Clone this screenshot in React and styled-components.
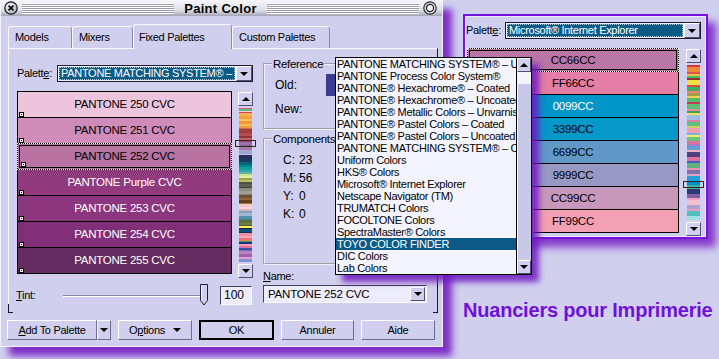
import React from "react";
import styled, { createGlobalStyle } from "styled-components";

const UI = `"Liberation Sans", Arial, sans-serif`;
const LAV = "#d0d0ee";
const TEAL = "#0b5b86";

const GlobalStyle = createGlobalStyle`
  html, body { margin: 0; padding: 0; background: ${LAV}; }
  body { font-family: ${UI}; font-size: 11px; line-height: 13px; letter-spacing: -0.3px; color: #000; }
  * { box-sizing: border-box; }
`;

const Desktop = styled.div`
  position: relative;
  width: 719px;
  height: 359px;
  overflow: hidden;
  background: ${LAV};
`;

/* ---------- main window ---------- */

const MainWindow = styled.div`
  position: absolute;
  left: 0;
  top: 0;
  width: 443px;
  height: 347px;
  background: ${LAV};
  border: 1px solid #f2f2ff;
  border-top: none;
  box-shadow: 9px 9px 7px rgba(118, 28, 196, 0.9);
  display: flex;
  flex-direction: column;
  z-index: 2;
`;

const TitleBar = styled.div`
  height: 16px;
  display: flex;
  align-items: center;
  gap: 4px;
  padding: 0 5px 0 3px;
  background: linear-gradient(#f6f6fa, #dedee6 65%, #a4a4b4);
`;

const Stripes = styled.div`
  flex: 1;
  height: 11px;
  background: repeating-linear-gradient(to bottom, #ffffff 0 1px, #9c9cae 1px 2px);
`;

const TitleText = styled.div`
  font-weight: bold;
  font-size: 13px;
  letter-spacing: 0.3px;
  padding: 0 6px;
`;

const Body = styled.div`
  flex: 1;
  display: flex;
  flex-direction: column;
  padding: 8px 4px 0 7px;
`;

const TabRow = styled.div`
  display: flex;
  align-items: flex-end;
  height: 24px;
`;

const Tab = styled.div`
  width: ${(p) => p.w}px;
  height: ${(p) => (p.active ? 25 : 22)}px;
  padding: ${(p) => (p.active ? "6px 0 0 5px" : "4px 0 0 6px")};
  margin-bottom: ${(p) => (p.active ? -1 : 0)}px;
  border: 1px solid #f8f8ff;
  border-right-color: #8c8cac;
  border-bottom: none;
  border-radius: 3px 4px 0 0;
  background: ${LAV};
  position: relative;
  z-index: ${(p) => (p.active ? 1 : 0)};
  white-space: nowrap;
`;

const Panel = styled.div`
  position: relative;
  width: 430px;
  height: 265px;
  border-top: 1px solid #f8f8ff;
  border-left: 1px solid #f8f8ff;
  border-right: 1px solid #181830;
  display: flex;
  padding-left: 8px;

  &::before,
  &::after {
    content: "";
    position: absolute;
    bottom: 0;
    width: 4px;
    height: 8px;
    border-bottom: 1px solid #181830;
  }
  &::before {
    left: -1px;
    border-left: 1px solid #181830;
  }
  &::after {
    right: -1px;
    border-right: 1px solid #181830;
  }
`;

const LeftCol = styled.div`
  width: 246px;
  display: flex;
  flex-direction: column;
`;

const RightCol = styled.div`
  width: 165px;
  display: flex;
  flex-direction: column;
`;

const FieldRow = styled.div`
  display: flex;
  align-items: center;
  height: ${(p) => p.h || 17}px;
  margin-top: ${(p) => p.mt || 0}px;
`;

const Label = styled.span`
  width: ${(p) => p.w}px;
  flex: none;
  white-space: nowrap;
`;

const SelectBox = styled.div`
  display: flex;
  width: ${(p) => p.w}px;
  height: 17px;
  border: 1px solid #1c1c34;
  background: #f0f0fc;
`;

const SelectValue = styled.div`
  flex: 1;
  margin: 1px;
  padding: 0 2px;
  line-height: 13px;
  background: ${TEAL};
  color: #fff;
  outline: 1px dotted #a8c8d8;
  outline-offset: -1px;
  white-space: nowrap;
  overflow: hidden;
`;

const DropBtn = styled.div`
  width: 16px;
  flex: none;
  display: flex;
  align-items: center;
  justify-content: center;
  background: ${LAV};
  border: 1px solid;
  border-color: #ffffff #505070 #505070 #ffffff;
`;

const Tri = styled.span`
  width: 0;
  height: 0;
  border-left: 4px solid transparent;
  border-right: 4px solid transparent;
  ${(p) => (p.up ? "border-bottom" : "border-top")}: 4px solid #000;
`;

const ListArea = styled.div`
  display: flex;
  align-items: flex-start;
  gap: ${(p) => p.gap}px;
  margin-top: ${(p) => p.mt}px;
  margin-left: ${(p) => p.ml || 0}px;
`;

const SwatchList = styled.div`
  width: ${(p) => p.w}px;
  border: 1px solid #000;
  display: flex;
  flex-direction: column;
  background: #000;
  gap: 1px;
`;

const Swatch = styled.div`
  position: relative;
  height: ${(p) => p.h}px;
  background: ${(p) => p.bg};
  color: ${(p) => p.fg};
  display: flex;
  align-items: center;
  justify-content: center;
  font-size: 11.5px;
  letter-spacing: -0.25px;
  white-space: nowrap;

  ${(p) =>
    p.sel &&
    `
    z-index: 1;
    &::before {
      content: "";
      position: absolute;
      inset: -1px;
      border: 1px dotted #ffffff;
    }
    &::after {
      content: "";
      position: absolute;
      inset: 1px;
      border: 1px solid #000;
    }
  `}
`;

const Marker = styled.span`
  position: absolute;
  left: ${(p) => (p.sel ? 3 : 1)}px;
  bottom: ${(p) => (p.sel ? 2 : 0)}px;
  width: 5px;
  height: 5px;
  border: 1px solid #000;
  background: #fff;
  z-index: 2;

  &::after {
    content: "";
    position: absolute;
    left: 1px;
    top: 1px;
    width: 1px;
    height: 1px;
    background: #000;
  }
`;

const ScrollCol = styled.div`
  width: 15px;
  height: ${(p) => p.h}px;
  margin-top: 1px;
  display: flex;
  flex-direction: column;
`;

const ArrowBtn = styled.div`
  height: 14px;
  flex: none;
  display: flex;
  align-items: center;
  justify-content: center;
  background: ${LAV};
  border: 1px solid;
  border-color: #ffffff #505070 #505070 #ffffff;
`;

const StripWrap = styled.div`
  position: relative;
  flex: 1;
  margin: 2px 1px;

  svg {
    display: block;
  }
`;

const StripThumb = styled.div`
  position: absolute;
  left: -4px;
  right: -4px;
  top: ${(p) => p.top}px;
  height: 7px;
  border: 1px solid #302818;
`;

const TintRow = styled.div`
  display: flex;
  align-items: center;
  height: 20px;
  margin-top: 7px;
  margin-left: -1px;
`;

const TextInput = styled.div`
  width: ${(p) => p.w}px;
  height: ${(p) => p.h}px;
  margin-left: ${(p) => p.ml || 0}px;
  display: flex;
  align-items: center;
  padding-left: 3px;
  font-size: 12px;
  letter-spacing: 0;
  background: #ececfa;
  border: 1px solid;
  border-color: #404058 #f8f8ff #f8f8ff #404058;
  white-space: nowrap;
`;

const Group = styled.fieldset`
  margin: ${(p) => p.mt}px 0 0 0;
  padding: ${(p) => p.pt}px 4px 0 0;
  height: ${(p) => p.h}px;
  min-width: 0;
  border: 2px groove #f0f0fc;
`;

const Legend = styled.legend`
  padding: 0 1px;
  margin-left: 7px;
  line-height: 12px;
  font-size: 11.5px;
  letter-spacing: -0.3px;
`;

const RefGrid = styled.div`
  display: grid;
  grid-template-columns: 51px 1fr;
  grid-auto-rows: 24px;
  align-items: center;
  padding-left: 10px;
  font-size: 12px;
  letter-spacing: 0;
`;

const OldSwatch = styled.div`
  height: 22px;
  background: #3b3c8e;
`;

const CompGrid = styled.div`
  display: grid;
  grid-template-columns: 16px auto;
  grid-auto-rows: 18px;
  align-items: center;
  padding-left: 18px;
  font-size: 12px;
  letter-spacing: 0;
`;

const NameLabel = styled.div`
  margin-top: 5px;
  line-height: 12px;
`;

const Combo = styled.div`
  display: flex;
  width: 164px;
  height: 18px;
  margin-top: 3px;
  background: #ececfa;
  border: 1px solid;
  border-color: #404058 #f8f8ff #f8f8ff #404058;
`;

const ComboText = styled.div`
  flex: 1;
  padding-left: 4px;
  line-height: 16px;
  font-size: 11.5px;
  letter-spacing: -0.2px;
`;

const ComboBtn = styled(DropBtn)`
  margin: 1px;
  width: 15px;
`;

const ButtonRow = styled.div`
  display: flex;
  gap: 7px;
  margin-top: 7px;
  margin-left: -1px;
`;

const Button = styled.div`
  width: ${(p) => p.w}px;
  height: 20px;
  display: flex;
  align-items: center;
  justify-content: center;
  gap: 8px;
  background: ${LAV};
  border: ${(p) => (p.primary ? "2px solid #000" : "1px solid")};
  border-color: ${(p) => (p.primary ? "#000" : "#ffffff #6c6c8c #6c6c8c #ffffff")};
  white-space: nowrap;
`;

const SplitButton = styled.div`
  display: flex;
`;

/* ---------- popup list ---------- */

const DropList = styled.div`
  position: absolute;
  left: 335px;
  top: 57px;
  width: 197px;
  height: 218px;
  border: 1px solid #000;
  background: #f4f4fe;
  display: flex;
  z-index: 5;
  box-shadow: 7px 7px 6px rgba(112, 24, 192, 0.85);
`;

const DropItems = styled.div`
  flex: 1;
  overflow: hidden;
`;

const DropItem = styled.div`
  height: 12px;
  line-height: 12px;
  padding-left: 1px;
  white-space: nowrap;
  background: ${(p) => (p.sel ? TEAL : "transparent")};
  color: ${(p) => (p.sel ? "#fff" : "#000")};
`;

const DropScroll = styled.div`
  width: 15px;
  display: flex;
  flex-direction: column;
  border-left: 1px solid #000;
`;

const DropThumb = styled.div`
  height: 12px;
  background: #f4f4fe;
`;

const DropTrack = styled.div`
  flex: 1;
  background: #c8c8e8;
  border-left: 1px solid #ffffff;
`;

/* ---------- side window ---------- */

const SideWindow = styled.div`
  position: absolute;
  left: 463px;
  top: 14px;
  width: 245px;
  height: 225px;
  border: 2px solid #7812e0;
  background: ${LAV};
  box-shadow: inset 0 0 0 1px #ececfa, 8px 8px 8px rgba(118, 28, 196, 0.85);
  padding: 6px 0 0 1px;
  display: flex;
  flex-direction: column;
  z-index: 1;
`;

const Caption = styled.div`
  position: absolute;
  left: 463px;
  top: 300px;
  font-weight: bold;
  font-size: 20px;
  line-height: 20px;
  letter-spacing: -0.2px;
  color: #7010d8;
  white-space: nowrap;
`;

/* ---------- data ---------- */

const pantone = [
  { name: "PANTONE 250 CVC", bg: "#ecc4dc", fg: "#000" },
  { name: "PANTONE 251 CVC", bg: "#d08cb8", fg: "#000" },
  { name: "PANTONE 252 CVC", bg: "#b873a3", fg: "#000", sel: true },
  { name: "PANTONE Purple CVC", bg: "#923a7e", fg: "#fff" },
  { name: "PANTONE 253 CVC", bg: "#8c367e", fg: "#fff" },
  { name: "PANTONE 254 CVC", bg: "#822f7a", fg: "#fff" },
  { name: "PANTONE 255 CVC", bg: "#642c5e", fg: "#fff" },
];

const webColors = [
  { name: "CC66CC", bg: "#b877a7", fg: "#000", sel: true },
  { name: "FF66CC", bg: "#e47ea6", fg: "#000" },
  { name: "0099CC", bg: "#0096c8", fg: "#fff" },
  { name: "3399CC", bg: "#0798ca", fg: "#000" },
  { name: "6699CC", bg: "#6098c8", fg: "#000" },
  { name: "9999CC", bg: "#9898c4", fg: "#000" },
  { name: "CC99CC", bg: "#c898bc", fg: "#000" },
  { name: "FF99CC", bg: "#f4a0b4", fg: "#000" },
];

const palettes = [
  "PANTONE MATCHING SYSTEM® – Uncoated",
  "PANTONE Process Color System®",
  "PANTONE® Hexachrome® – Coated",
  "PANTONE® Hexachrome® – Uncoated",
  "PANTONE® Metallic Colors – Unvarnished",
  "PANTONE® Pastel Colors – Coated",
  "PANTONE® Pastel Colors – Uncoated",
  "PANTONE MATCHING SYSTEM® – Coated",
  "Uniform Colors",
  "HKS® Colors",
  "Microsoft® Internet Explorer",
  "Netscape Navigator (TM)",
  "TRUMATCH Colors",
  "FOCOLTONE Colors",
  "SpectraMaster® Colors",
  "TOYO COLOR FINDER",
  "DIC Colors",
  "Lab Colors",
];

const leftBands = [
  ["#e05878", 1], ["#50c080", 1], ["#f4d0d8", 1], ["#d04060", 1], ["#f8b050", 2], ["#f0a040", 2],
  ["#f8c060", 2], ["#f09838", 2], ["#f8b858", 2], ["#e8a040", 1], ["#c87050", 1], ["#a04040", 3],
  ["#b84c50", 2], ["#8c3838", 2], ["#c85870", 2], ["#a83c60", 1], ["#9a70a8", 2], ["#8c60a0", 2],
  ["#a07ab0", 2], ["#b8a0c8", 1], ["#9ca4d0", 2], ["#c0c0e4", 1], ["#283058", 3], ["#1c3c68", 2],
  ["#006878", 2], ["#008888", 2], ["#10a0a0", 2], ["#30a8a8", 2], ["#60b8a0", 1], ["#c8e890", 2],
  ["#e0f0a0", 1], ["#a0a050", 2], ["#c0c060", 1], ["#505040", 2], ["#606050", 2], ["#404038", 1],
  ["#8c8c80", 2], ["#a0a090", 2], ["#808070", 1], ["#705030", 2], ["#906838", 2], ["#604020", 2],
  ["#a07840", 1], ["#f0c8d0", 2], ["#f8d8e0", 2], ["#e0b0c0", 1], ["#80a0b8", 2], ["#a0b8d0", 2],
  ["#5090a8", 2], ["#408098", 1], ["#607038", 2], ["#708040", 2], ["#506028", 1], ["#f8f060", 1],
  ["#202020", 1], ["#0a5080", 2], ["#103060", 1], ["#f090a0", 2], ["#f8a8b0", 2], ["#f07080", 1],
  ["#f08050", 1], ["#40a060", 1], ["#203080", 1], ["#f0a0b8", 2], ["#e070a0", 1], ["#4050a0", 2],
  ["#6070c0", 1], ["#c080c0", 2], ["#a060b0", 2], ["#e0a0d0", 2], ["#8090d0", 2],
];

const rightBands = [
  ["#d03838", 1], ["#f08838", 2], ["#e05050", 1], ["#f0c040", 1], ["#48c058", 1], ["#903030", 1],
  ["#f0e040", 2], ["#e04848", 1], ["#40b060", 2], ["#f08080", 1], ["#a0a040", 1], ["#f0d050", 1],
  ["#50c068", 2], ["#c83850", 1], ["#60c070", 2], ["#e090a0", 1], ["#40a050", 1], ["#f0e060", 1],
  ["#a0c0e0", 2], ["#e080a0", 1], ["#60c080", 2], ["#d0d060", 1], ["#f0a0b0", 2], ["#80b0e0", 1],
  ["#f0f060", 1], ["#70c080", 2], ["#e070a0", 1], ["#a080c0", 1], ["#60a0d0", 2], ["#f0b0c0", 1],
  ["#504080", 2], ["#e070a0", 2], ["#4060c0", 1], ["#60b080", 2], ["#f090b0", 1], ["#8070b0", 2],
  ["#e0a0c0", 1], ["#20a0e0", 2], ["#0090d0", 2], ["#40b0a0", 2], ["#303870", 2], ["#8060a0", 2],
  ["#f0a0c0", 1], ["#f0c0d0", 2], ["#b0a0d0", 2], ["#e0a0c0", 1], ["#50c0c0", 2], ["#a0e0e0", 2],
];

function Strip({ bands }) {
  const total = bands.reduce((s, b) => s + b[1], 0);
  let y = 0;
  return (
    <svg width="100%" height="100%" viewBox={`0 0 10 ${total}`} preserveAspectRatio="none" shapeRendering="crispEdges">
      {bands.map(([c, h], i) => {
        const r = <rect key={i} x="0" y={y} width="10" height={h} fill={c} />;
        y += h;
        return r;
      })}
    </svg>
  );
}

function ColorScroller({ height, bands, thumb }) {
  return (
    <ScrollCol h={height}>
      <ArrowBtn>
        <Tri up />
      </ArrowBtn>
      <StripWrap>
        <Strip bands={bands} />
        <StripThumb top={thumb} />
      </StripWrap>
      <ArrowBtn>
        <Tri />
      </ArrowBtn>
    </ScrollCol>
  );
}

function CloseButton() {
  return (
    <svg width="14" height="14" viewBox="0 0 14 14">
      <defs>
        <radialGradient id="cb" cx="0.4" cy="0.35" r="0.7">
          <stop offset="0" stopColor="#ffffff" />
          <stop offset="1" stopColor="#a8a8b4" />
        </radialGradient>
      </defs>
      <circle cx="7" cy="7" r="6.2" fill="url(#cb)" stroke="#18181e" strokeWidth="1.2" />
      <path d="M4.6 4.6 L9.4 9.4 M9.4 4.6 L4.6 9.4" stroke="#101016" strokeWidth="2" />
    </svg>
  );
}

function RoundButton() {
  return (
    <svg width="14" height="14" viewBox="0 0 14 14">
      <circle cx="7" cy="7" r="6.2" fill="#e4e4ea" stroke="#28282e" strokeWidth="1.2" />
      <circle cx="7" cy="7" r="3.6" fill="#f4f4f8" stroke="#202026" strokeWidth="1.2" />
    </svg>
  );
}

function TintSlider() {
  return (
    <svg width="145" height="22" viewBox="0 0 145 22">
      <line x1="0" y1="11.5" x2="139" y2="11.5" stroke="#8888a0" />
      <line x1="0" y1="12.5" x2="139" y2="12.5" stroke="#ffffff" />
      <path d="M137.5 0.5 H144.5 V16.5 L141 21 L137.5 16.5 Z" fill={LAV} stroke="#202030" />
      <path d="M138.5 1.5 V16" stroke="#ffffff" />
    </svg>
  );
}

export default function App() {
  return (
    <Desktop>
      <GlobalStyle />

      <SideWindow>
        <FieldRow>
          <Label w={39}>
            Palett<u>e</u>:
          </Label>
          <SelectBox w={196}>
            <SelectValue>Microsoft® Internet Explorer</SelectValue>
            <DropBtn>
              <Tri />
            </DropBtn>
          </SelectBox>
        </FieldRow>
        <ListArea gap={7} mt={9} ml={1}>
          <SwatchList w={212}>
            {webColors.map((c) => (
              <Swatch key={c.name} h={22} bg={c.bg} fg={c.fg} sel={c.sel}>
                {c.name}
              </Swatch>
            ))}
          </SwatchList>
          <ColorScroller height={187} bands={rightBands} thumb={116} />
        </ListArea>
      </SideWindow>

      <MainWindow>
        <TitleBar>
          <CloseButton />
          <Stripes />
          <TitleText>Paint Color</TitleText>
          <Stripes />
          <RoundButton />
        </TitleBar>

        <Body>
          <TabRow>
            <Tab w={64}>Models</Tab>
            <Tab w={61}>Mixers</Tab>
            <Tab w={99} active>
              Fixed Palettes
            </Tab>
            <Tab w={98}>Custom Palettes</Tab>
          </TabRow>

          <Panel>
            <LeftCol>
              <FieldRow mt={16}>
                <Label w={40}>
                  Palett<u>e</u>:
                </Label>
                <SelectBox w={196}>
                  <SelectValue>PANTONE MATCHING SYSTEM® – Uncoated</SelectValue>
                  <DropBtn>
                    <Tri />
                  </DropBtn>
                </SelectBox>
              </FieldRow>

              <ListArea gap={6} mt={9}>
                <SwatchList w={215}>
                  {pantone.map((c) => (
                    <Swatch key={c.name} h={25} bg={c.bg} fg={c.fg} sel={c.sel}>
                      {c.name}
                      <Marker sel={c.sel} />
                    </Swatch>
                  ))}
                </SwatchList>
                <ColorScroller height={186} bands={leftBands} thumb={32} />
              </ListArea>

              <TintRow>
                <Label w={47}>
                  <u>T</u>int:
                </Label>
                <TintSlider />
                <TextInput w={32} h={19} ml={12}>
                  100
                </TextInput>
              </TintRow>
            </LeftCol>

            <RightCol>
              <Group mt={9} h={72} pt={3}>
                <Legend>Reference</Legend>
                <RefGrid>
                  <span>Old:</span>
                  <OldSwatch />
                  <span>New:</span>
                  <span />
                </RefGrid>
              </Group>

              <Group mt={3} h={132} pt={6}>
                <Legend>Components</Legend>
                <CompGrid>
                  <span>C:</span>
                  <span>23</span>
                  <span>M:</span>
                  <span>56</span>
                  <span>Y:</span>
                  <span>0</span>
                  <span>K:</span>
                  <span>0</span>
                </CompGrid>
              </Group>

              <NameLabel>
                <u>N</u>ame:
              </NameLabel>
              <Combo>
                <ComboText>PANTONE 252 CVC</ComboText>
                <ComboBtn>
                  <Tri />
                </ComboBtn>
              </Combo>
            </RightCol>
          </Panel>

          <ButtonRow>
            <SplitButton>
              <Button w={90}>
                <span>
                  <u>A</u>dd To Palette
                </span>
              </Button>
              <Button w={14}>
                <Tri />
              </Button>
            </SplitButton>
            <Button w={74}>
              <span>
                O<u>p</u>tions
              </span>
              <Tri />
            </Button>
            <Button w={75} primary>
              OK
            </Button>
            <Button w={73}>Annuler</Button>
            <Button w={74}>Aide</Button>
          </ButtonRow>
        </Body>
      </MainWindow>

      <DropList>
        <DropItems>
          {palettes.map((p, i) => (
            <DropItem key={p} sel={i === 15}>
              {p}
            </DropItem>
          ))}
        </DropItems>
        <DropScroll>
          <ArrowBtn>
            <Tri up />
          </ArrowBtn>
          <DropThumb />
          <DropTrack />
          <ArrowBtn>
            <Tri />
          </ArrowBtn>
        </DropScroll>
      </DropList>

      <Caption>Nuanciers pour Imprimerie</Caption>
    </Desktop>
  );
}
